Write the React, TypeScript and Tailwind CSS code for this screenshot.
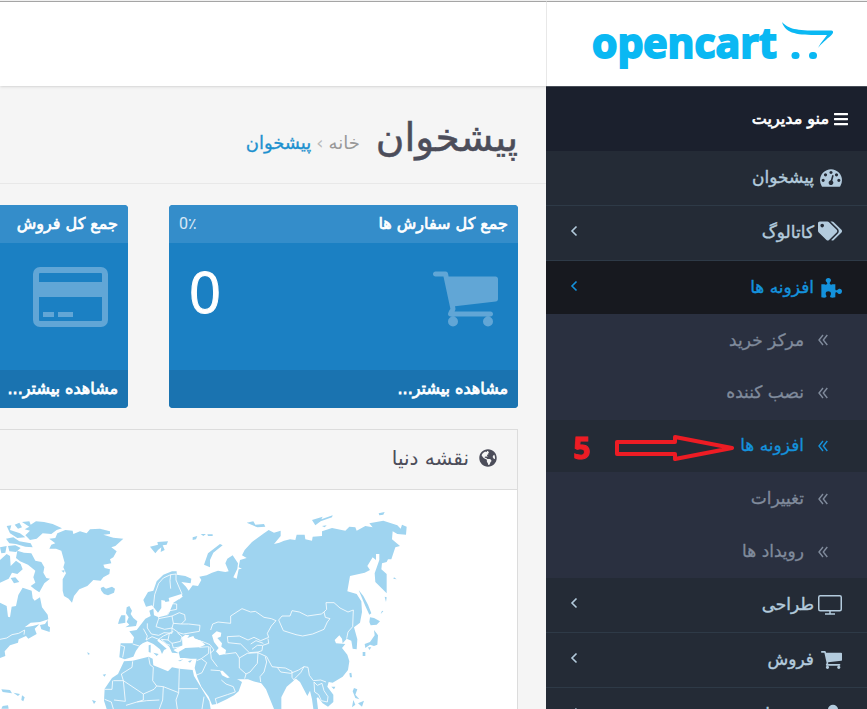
import type { ReactNode } from "react";
import { FaBars, FaGlobeAmericas, FaTags, FaUser } from "react-icons/fa";

const CART =
  "M704 1536q0 52-38 90t-90 38-90-38-38-90 38-90 90-38 90 38 38 90zm896 0q0 52-38 90t-90 38-90-38-38-90 38-90 90-38 90 38 38 90zm128-1088v512q0 24-16.5 42.5t-40.5 21.5l-1044 122q13 60 13 70 0 16-24 64h920q26 0 45 19t19 45-19 45-45 19h-1024q-26 0-45-19t-19-45q0-11 8-31.5t16-36 21.5-40 15.5-29.5l-177-823h-204q-26 0-45-19t-19-45 19-45 45-19h256q16 0 28.5 6.5t19.5 15.5 13 24.5 8 26 5.5 29.5 4.5 26h1201q26 0 45 19t19 45z";
const GAUGE =
  "M384 1152q0-53-37.5-90.5t-90.5-37.5-90.5 37.5-37.5 90.5 37.5 90.5 90.5 37.5 90.5-37.5 37.5-90.5zm192-448q0-53-37.5-90.5t-90.5-37.5-90.5 37.5-37.5 90.5 37.5 90.5 90.5 37.5 90.5-37.5 37.5-90.5zm428 481l101-382q6-26-7.5-48.5t-38.5-29.5-48 6.500-30 39.5l-101 382q-60 5-107 43.5t-63 98.5q-20 77 20 146t117 89 146-20 89-117q16-60-6-117t-72-91zm660-33q0-53-37.5-90.5t-90.5-37.5-90.5 37.5-37.5 90.5 37.5 90.5 90.5 37.5 90.5-37.5 37.5-90.5zm-640-640q0-53-37.5-90.5t-90.5-37.5-90.5 37.5-37.5 90.5 37.5 90.5 90.5 37.5 90.5-37.5 37.5-90.5zm448 192q0-53-37.5-90.5t-90.5-37.5-90.5 37.5-37.5 90.5 37.5 90.5 90.5 37.5 90.5-37.5 37.5-90.5zm320 448q0 261-141 483-19 29-54 29h-1402q-35 0-54-29-141-221-141-483 0-182 71-348t191-286 286-191 348-71 348 71 286 191 191 286 71 348z";

function CartIcon({ className }: { className: string }) {
  return (
    <svg viewBox="64 256 1664 1408" className={className} fill="currentColor" aria-hidden="true">
      <path d={CART} />
    </svg>
  );
}

function GaugeIcon() {
  return (
    <svg viewBox="0 256 1792 1408" className="h-[18px] w-[22px]" fill="currentColor" aria-hidden="true">
      <path d={GAUGE} />
    </svg>
  );
}

function PuzzleIcon() {
  return (
    <svg viewBox="0 0 63 60" className="h-5 w-[21px]" fill="currentColor" aria-hidden="true">
      <path d="M1 19H10C14 21 19 20 19 16 18 13 14 11 14 7 14 3 17 0 22 0S30 3 30 7C30 11 26 13 26 16 26 20 31 21 34 19H43V33C43 37 46 38 49 36 51 34 53 32 56 32 60 32 63 35 63 40S60 48 56 48C53 48 51 46 49 44 46 42 43 43 43 47V58C37 60 31 60 28 58 25 55 30 51 30 47 30 42 26 40 22 40S14 42 14 47C14 51 18 54 16 57 13 60 6 59 1 58Z" />
    </svg>
  );
}

function DesktopIcon() {
  return (
    <svg viewBox="0 0 24 20" className="h-5 w-6" fill="none" stroke="currentColor" aria-hidden="true">
      <rect x="0.75" y="0.75" width="22.5" height="15" rx="1.5" strokeWidth="1.5" />
      <path d="M12 16v3M7 19h10" strokeWidth="1.5" />
    </svg>
  );
}

function CardIcon() {
  return (
    <svg viewBox="0 0 75 60" className="h-[60px] w-[75px]" aria-hidden="true">
      <rect x="3" y="3" width="69" height="54" rx="4" fill="none" stroke="currentColor" strokeWidth="6" />
      <path fill="currentColor" d="M6 15h63v15H6zM10 45h11v5H10zM25 45h15v5H25z" />
    </svg>
  );
}

function Chevron() {
  return (
    <svg viewBox="0 0 8 12" className="mb-1 h-3 w-2" fill="none" stroke="currentColor" strokeWidth="1.6" aria-hidden="true">
      <path d="M6.500 1.500 2 6l4.500 4.500" />
    </svg>
  );
}

function DoubleChevron() {
  return (
    <svg viewBox="0 0 10 12" className="h-3 w-[10px]" fill="none" stroke="currentColor" strokeWidth="1.4" aria-hidden="true">
      <path d="M5 1 1 6l4 5M9.300 1l-4 5 4 5" />
    </svg>
  );
}

function MenuItem({ icon, label, arrow = true, active = false }: { icon: ReactNode; label: string; arrow?: boolean; active?: boolean }) {
  return (
    <a
      href="#"
      className={
        "flex shrink-0 items-center pr-[25px] pl-6 text-[17px] [-webkit-text-stroke:0.4px_currentColor] " +
        (active ? "h-[53px] bg-[#17191f] text-[#1492dc]" : "h-[55px] border-b border-[#2e3a47] bg-[#242b36] text-[#b3cbdd]")
      }
    >
      <span className="flex w-7 justify-start">{icon}</span>
      <span className="flex-1">{label}</span>
      {arrow && <Chevron />}
    </a>
  );
}

function SubItem({ label, active = false }: { label: string; active?: boolean }) {
  return (
    <a
      href="#"
      className={
        "flex flex-1 items-center gap-[14px] pr-[39px] text-[17px] [-webkit-text-stroke:0.3px_currentColor] " +
        (active ? "bg-[#242b36] text-[#1492dc]" : "text-[#808b9c]")
      }
    >
      <DoubleChevron />
      <span>{label}</span>
    </a>
  );
}

function Tile({ title, percent, value, icon }: { title: string; percent: string; value: string; icon: ReactNode }) {
  return (
    <section className="w-[349px] shrink-0 overflow-hidden rounded bg-[#1b80c3] text-white">
      <div className="flex h-[38px] items-center justify-between bg-[#348dca] px-[10px]">
        <h2 className="text-base [-webkit-text-stroke:0.7px_currentColor]">{title}</h2>
        <span className="font-[Roboto,'DejaVu_Sans',sans-serif] text-base text-white/80">{percent}</span>
      </div>
      <div className="flex h-[127px] items-start justify-between px-5 pt-6">
        <span className="text-[#61a6d6]">{icon}</span>
        <span className="font-['Open_Sans',sans-serif] text-[56px] leading-[48px] [-webkit-text-stroke:1px_currentColor]">{value}</span>
      </div>
      <div className="flex h-[38px] items-center bg-[#1a73b0] px-[10px]">
        <a href="#" className="text-base [-webkit-text-stroke:0.8px_currentColor]">مشاهده بیشتر...</a>
      </div>
    </section>
  );
}

const LAND = [
  // Canada
  "M0 338 20 348 24 380 30 382 35 350 48 348 55 315 68 293 95 302 98 325 104 332 120 322 126 352 143 374 145 388 120 396 92 398 74 412 98 408 118 403 104 416 110 432 85 446 78 438 56 448 54 458 30 466 14 484 16 498 0 504Z",
  "M120 405 135 402 143 390 144 408 150 412 149 426 124 418Z",
  "M0 210 20 192 30 198 32 228 48 212 62 222 68 238 52 252 36 248 26 266 0 278Z",
  "M52 182 72 188 94 190 106 212 124 216 133 232 130 248 139 264 150 266 133 280 118 307 104 298 92 288 106 278 100 262 106 242 84 224 60 214 48 204Z",
  "M32 264 46 262 58 276 42 280Z",
  "M0 172 20 168 16 188 4 190ZM24 168 46 166 62 174 48 186 28 184ZM18 146 40 142 58 154 92 160 98 172 76 170 48 162 28 160ZM20 108 34 106 30 120 60 130 76 142 52 144 30 130ZM44 104 58 98 66 112 54 116Z",
  "M66 96 88 94 92 104 108 94 132 96 158 102 186 115 170 120 154 132 128 130 110 146 90 150 76 136 90 122 74 118 88 110Z",
  // Greenland and Iceland
  "M148 146 166 144 172 130 196 120 218 122 220 132 240 124 260 130 270 118 300 116 330 124 330 132 310 134 340 143 370 146 346 168 334 172 350 184 340 202 330 208 334 220 310 224 314 234 330 238 328 252 310 262 302 272 280 270 262 288 238 298 222 318 216 338 206 326 192 318 188 302 188 268 198 250 190 232 194 218 184 182 168 176 148 176 154 164 166 160Z",
  "M302 294 310 290 318 296 336 290 345 296 342 308 324 316 312 312 304 302ZM184 242 194 240 192 248Z",
  // Svalbard and Arctic islands
  "M450 170 474 164 472 156 504 154 500 164 488 166 494 180 482 186 484 172 474 180 466 190 458 180ZM578 142 592 138 588 148 578 150ZM602 132 618 132 610 138ZM622 133 638 133 638 138 624 138Z",
  "M612 224 624 190 660 162 668 166 640 188 630 210 630 232ZM740 98 760 94 766 104 792 102 796 110 772 112 758 106ZM936 90 968 80 964 88 998 76 996 82 962 94 946 106ZM966 108 980 106 974 112ZM1136 70 1154 66 1150 74 1138 76Z",
  // British Isles
  "M380 352 388 348 396 362 392 372 400 384 412 394 408 408 376 412 388 404 380 396 386 382 378 370ZM358 388 364 376 376 376 376 398 354 402Z",
  // Europe and Asia
  "M430 330 444 306 460 302 470 274 490 254 516 244 530 244 530 254 556 258 574 266 572 280 544 276 558 290 566 302 578 286 594 288 604 270 598 260 620 256 636 248 654 242 676 246 686 244 676 220 682 206 698 196 714 220 712 236 700 262 710 266 716 238 726 236 716 232 720 210 740 204 726 196 734 180 756 156 792 130 806 120 822 128 842 122 842 138 822 162 838 158 852 152 870 148 886 150 890 134 914 134 916 148 936 152 938 140 966 138 966 124 996 114 1036 122 1048 110 1066 112 1070 122 1096 108 1118 112 1108 100 1150 92 1192 106 1202 116 1206 104 1220 110 1218 134 1192 132 1178 124 1176 148 1200 168 1186 172 1174 208 1164 208 1160 216 1146 220 1144 238 1160 252 1160 310 1126 276 1124 250 1138 210 1138 192 1128 192 1128 210 1118 202 1102 228 1110 240 1094 248 1050 258 1042 304 1070 312 1084 334 1086 366 1080 398 1062 412 1072 448 1070 478 1058 476 1054 452 1040 446 1028 460 1026 446 1018 436 1004 450 1008 460 1036 462 1026 474 1042 494 1048 514 1044 540 1028 560 998 578 986 576 982 590 1000 614 1000 636 984 650 968 640 954 622 950 624 954 657 940 657 936 628 930 602 922 618 900 576 888 566 860 590 844 622 844 657 822 657 798 598 784 580 760 574 744 568 716 568 688 562 668 542 660 542 666 556 682 564 700 560 710 566 726 576 716 604 702 616 680 628 650 642 636 644 626 620 604 590 592 562 584 534 590 506 572 506 554 504 540 504 536 486 556 474 598 472 616 464 604 454 576 442 560 454 548 446 548 466 520 480 536 490 516 488 508 470 494 458 476 446 472 452 500 476 492 480 486 492 480 478 460 462 442 454 428 460 420 466 408 482 400 500 374 508 358 502 362 460 398 460 402 442 388 424 410 420 436 386 452 378 448 362 460 356 462 376 476 382 500 376 510 362 520 338 548 320 544 312 506 324 508 334 496 336 490 318 506 292 512 296 500 314 504 334 484 330 484 354 474 368 456 346 438 350Z",
  // Africa
  "M372 514 398 512 446 500 458 506 460 526 504 544 516 532 538 536 578 540 582 558 628 634 632 657 320 657 312 632 314 596 336 564 354 552Z",
  // Japan and Pacific islands
  "M1076 300 1090 318 1104 344 1114 370 1108 374 1096 348ZM1110 382 1122 384 1140 394 1130 404 1112 406 1108 396ZM1122 420 1134 436 1132 464 1122 468 1110 464 1096 474 1094 462 1110 456 1124 436ZM1088 486 1096 486 1096 498 1088 498ZM1104 472 1114 472 1108 480ZM1054 548 1056 562 1050 562 1048 550ZM994 590 1006 590 1002 598ZM1062 594 1072 598 1066 614 1078 628 1066 624 1058 604ZM1074 640 1092 632 1086 650ZM1060 630 1066 644 1056 652ZM1154 320 1160 322 1158 336ZM1146 362 1150 364 1142 372ZM1182 262 1190 268 1180 266Z",
  // Mediterranean, Atlantic and Caribbean islands
  "M446 466 452 464 452 488 446 486ZM460 488 476 492 470 498ZM534 512 550 508 540 514ZM564 514 576 510 570 518ZM248 484 254 486ZM262 486 264 494 270 492ZM308 554 318 552 314 560ZM276 630 288 634 282 642ZM4 598 30 600 36 610 8 606ZM40 608 60 612 54 618ZM8 648 24 646 26 656 4 656ZM66 616 74 622 70 634 64 630Z",
];

const BORDERS = [
  "M0 448 20 444 36 434 56 430 74 420 72 434",
  "M460 350 464 314 476 280 490 264 512 254 528 252M512 254 510 272 512 296M528 252 528 270 546 312 538 328",
  "M442 400 442 414 454 432 476 436 492 428 516 430 516 414 494 418 468 410 476 386 476 380M476 386 516 378 538 368 554 374 556 390 544 402 520 400 516 378M520 400 516 414 536 428 550 432 598 424 600 406 566 402 544 402M430 416 442 438 438 450 456 440 476 448 490 438 508 430 520 424M508 430 504 450 516 460 542 454 546 440 532 428M504 450 484 448 500 462 510 466M516 460 520 474 546 470M362 466 374 470 368 502M398 462 418 468M506 340 530 342 530 358 510 362 502 376",
  "M398 514 396 532 364 552 370 572 430 612 462 598 470 588 490 590 536 608 538 536M446 502 450 524 460 532 458 572 470 588M340 572 370 572 376 634 342 630M314 598 336 598 338 572M430 612 430 630 378 646M490 590 488 630 478 657M536 596 594 596M536 608 528 630 532 657M314 628 334 636 340 657M412 636 440 632 478 630M612 620 606 657",
  "M598 472 626 470 626 490 604 506 590 512M604 506 620 518 606 548 588 556M606 454 630 464 642 480 630 490",
  "M632 420 638 402 654 396 692 400 692 378 726 356 752 366 766 364 792 382 814 386 828 392 814 408 802 430 806 442 782 452 762 442 744 450 718 438 682 440 684 458 722 462 748 488 774 486 786 482 788 466 806 460 804 446",
  "M836 390 846 378 870 378 876 362 898 366 922 378 964 372 972 366 976 382 990 386 982 396 972 418 938 432 908 438 888 434 850 422Z",
  "M972 366 980 358 978 338 1002 338 1020 354 1044 366 1060 360 1058 410 1044 426 1040 446",
  "M676 492 708 488 718 504 718 534 738 552 734 566M718 504 742 490 774 488 772 520 750 546 738 552M774 488 800 500 816 530 832 532 842 546 872 550 896 540 912 530 924 532 928 556 940 572 962 570 978 576M796 500 800 516 792 546 780 560 782 576M832 532 856 534 876 544 876 562 888 578 884 566 902 548 912 530M942 576 952 586 966 580 972 602 984 620 982 636 964 632 956 614 944 606Z",
  "M632 540 660 542M650 642 646 626 682 614 706 606 700 590 678 582 664 570M630 470 634 506 652 530M752 462 768 452 790 460M756 478 772 466 786 466M650 484 676 492",
];

function WorldMap() {
  return (
    <svg viewBox="0 0 1320 657" className="h-[219px] w-[440px]" role="img" aria-label="نقشه دنیا">
      <g fill="#9fd4f0">
        {LAND.map((d) => (
          <path key={d} d={d} />
        ))}
      </g>
      <path d="M636 436 650 424 664 428 662 440 652 444 666 460 664 470 678 480 676 492 658 496 648 484 656 474 642 456Z" fill="#ffffff" />
      <path d="M546 442 556 434 568 436 562 444 580 438 584 446 604 452 608 468 588 470 572 466 548 468Z" fill="#ffffff" />
      <g fill="none" stroke="#ffffff" strokeOpacity="0.800" strokeWidth="3" strokeLinejoin="round">
        {BORDERS.map((d) => (
          <path key={d} d={d} />
        ))}
      </g>
    </svg>
  );
}

export default function App() {
  return (
    <div dir="rtl" lang="fa" className="flex h-screen flex-col overflow-hidden bg-[#f5f5f5] font-['DejaVu_Sans',sans-serif]">
      <header className="z-10 flex h-[86px] shrink-0 border-t border-[#f0f0f0] bg-white shadow-sm">
        <div className="flex w-[321px] shrink-0 border-t border-l border-t-[#a5a5a5] border-l-[#e8e8e8]">
          <a href="#" dir="ltr" className="flex flex-1 items-start gap-1 pt-[14px] pl-[45px] text-[#0ab8f3]">
            <span className="font-['Open_Sans',sans-serif] text-[41px] leading-[52px] font-bold [-webkit-text-stroke:2px_#0ab8f3]">opencart</span>
            <svg viewBox="0 0 54 40" className="mt-[6px] h-10 w-[54px] shrink-0" fill="currentColor" aria-hidden="true">
              <path d="M1 0C8 8 18 9 49 8.500c4 0 4 2 1 5C46 17 40 22 37 26c3-6 7-10 9-13C22 13 5 14 1 0Z" />
              <rect x="10.500" y="30" width="8" height="7" rx="3.500" />
              <rect x="28" y="30" width="8" height="7" rx="3.500" />
            </svg>
          </a>
        </div>
        <div className="flex-1 border-t border-[#a5a5a5]" />
      </header>
      <div className="flex min-h-0 flex-1">
        <nav className="relative flex w-[321px] shrink-0 flex-col overflow-hidden border-t border-[#505762] bg-[#242b36]">
          <button type="button" className="flex h-16 shrink-0 items-center gap-1 bg-[#1b202d] pr-[18px] text-base text-white [-webkit-text-stroke:0.7px_currentColor]">
            <FaBars className="h-4 w-4" aria-hidden="true" />
            منو مدیریت
          </button>
          <MenuItem icon={<GaugeIcon />} label="پیشخوان" arrow={false} />
          <MenuItem icon={<FaTags className="mb-1 h-6 w-6" aria-hidden="true" />} label="کاتالوگ" />
          <MenuItem icon={<PuzzleIcon />} label="افزونه ها" active />
          <div className="flex h-[264px] shrink-0 flex-col bg-[#2a3040]">
            <SubItem label="مرکز خرید" />
            <SubItem label="نصب کننده" />
            <SubItem label="افزونه ها" active />
            <SubItem label="تغییرات" />
            <SubItem label="رویداد ها" />
          </div>
          <MenuItem icon={<DesktopIcon />} label="طراحی" />
          <MenuItem icon={<CartIcon className="h-[18px] w-[21px]" />} label="فروش" />
          <MenuItem icon={<FaUser className="h-6 w-[18px]" aria-hidden="true" />} label="مشتریان" />
          <div dir="ltr" className="pointer-events-none absolute top-[345px] left-[27px] flex items-center gap-6 text-[#ed1c24]">
            <span className="font-['Open_Sans',sans-serif] text-[30px] leading-8 font-bold [-webkit-text-stroke:1px_currentColor]">5</span>
            <svg viewBox="0 0 120 28" className="h-7 w-[120px]" fill="none" stroke="currentColor" strokeWidth="4" strokeLinejoin="round" aria-hidden="true">
              <path d="M3 8h58V3l57 11-57 11v-5H3Z" />
            </svg>
          </div>
        </nav>
        <main className="min-w-0 flex-1 overflow-hidden">
          <div className="flex h-[98px] items-center gap-4 border-b border-[#e8e8e8] pt-2 pr-7">
            <h1 className="text-[39px] text-[#4c4d5a] [-webkit-text-stroke:0.5px_currentColor]">پیشخوان</h1>
            <nav className="flex items-center gap-[5px] pt-2 text-lg">
              <a href="#" className="text-[#999999]">خانه</a>
              <span className="text-[#bbbbbb]">›</span>
              <a href="#" className="text-[#1e91cf] [-webkit-text-stroke:0.3px_currentColor]">پیشخوان</a>
            </nav>
          </div>
          <div className="flex gap-[41px] pt-[21px] pr-7">
            <Tile title="جمع کل سفارش ها" percent="0٪" value="0" icon={<CartIcon className="mt-1 h-[56px] w-[65px]" />} />
            <Tile title="جمع کل فروش" percent="0٪" value="0" icon={<CardIcon />} />
          </div>
          <section className="mt-[21px] mr-7 border border-l-0 border-[#dcdcdc] bg-white">
            <h2 className="flex h-[60px] items-center gap-[10px] border-b border-[#dcdcdc] bg-[#f5f5f5] pr-5 pb-1 text-xl text-[#4c4d5a]">
              <FaGlobeAmericas className="h-[18px] w-[18px]" aria-hidden="true" />
              نقشه دنیا
            </h2>
            <div className="flex justify-end">
              <WorldMap />
            </div>
          </section>
        </main>
      </div>
    </div>
  );
}
